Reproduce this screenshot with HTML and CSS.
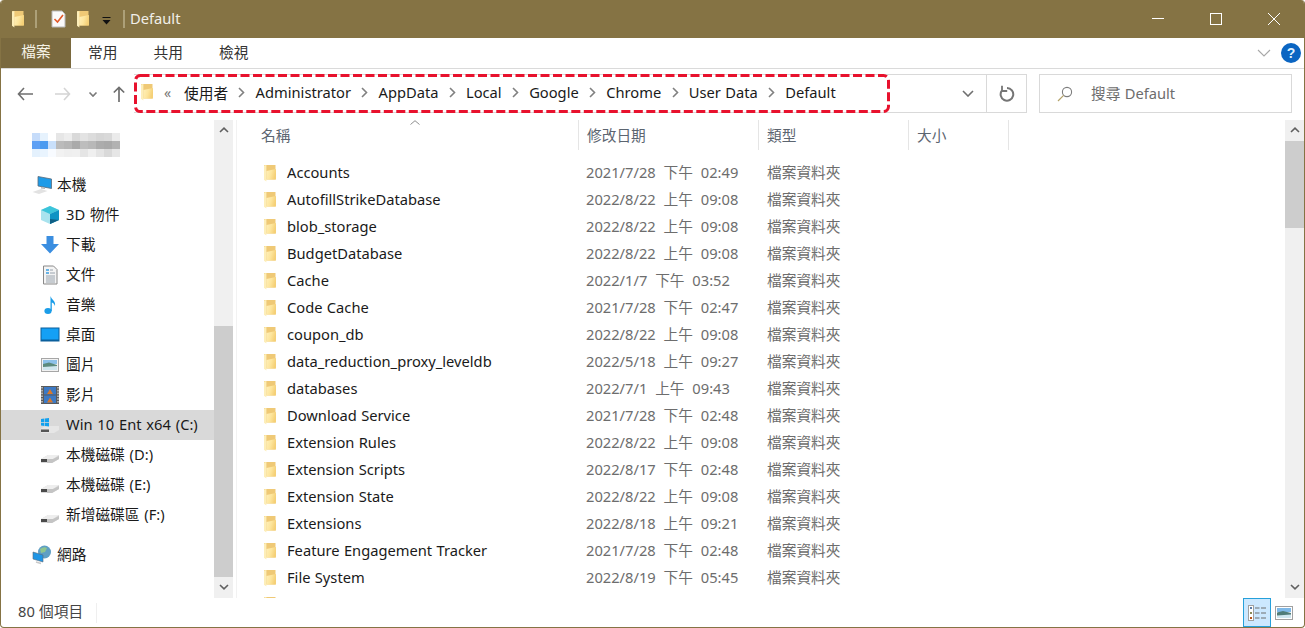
FILE: index.html
```html
<!DOCTYPE html>
<html lang="zh-Hant">
<head>
<meta charset="utf-8">
<title>Default</title>
<link rel="stylesheet" href="styles.css">
</head>
<body>
<svg class="defs" width="0" height="0" aria-hidden="true">
  <defs>
    <linearGradient id="fg" x1="0" y1="0" x2="1" y2="0.3">
      <stop offset="0" stop-color="#fff0ba"/><stop offset="0.55" stop-color="#fde59c"/><stop offset="1" stop-color="#f5d077"/>
    </linearGradient>
    <symbol id="folder" viewBox="0 0 14 18">
      <path d="M1 1 H12.5 V15.5 H1 Z" fill="#efc976"/>
      <path d="M3.4 7 L13 5 V15.5 H3.4 Z" fill="url(#fg)"/>
      <path d="M1 1.6 L3.4 1 V17.6 L1 15.8 Z" fill="#fdeeb9"/>
    </symbol>
    <symbol id="chev" viewBox="0 0 7 11">
      <path d="M1 1 L5.5 5.5 L1 10" fill="none" stroke="#808080" stroke-width="1.6"/>
    </symbol>
    <symbol id="drive" viewBox="0 0 20 14">
      <path d="M1 8 L8 4 H19 V8 L12 12 H1 Z" fill="#d8d8d8"/>
      <path d="M1 8 L8 4 H19 L13 8 Z" fill="#eeeeee"/>
      <path d="M1 8 H7 V11 H1 Z" fill="#4a4a4a"/>
      <path d="M7 8 H13 L19 5 V8 L12 12 H7 Z" fill="#c4c4c4"/>
    </symbol>
  </defs>
</svg>
<div class="window">
  <header class="titlebar">
    <svg class="qa-folder first"><use href="#folder"/></svg>
    <span class="qa-sep"></span>
    <svg class="qa-check" viewBox="0 0 15 18">
      <path d="M1 1 H11 L14 4 V17 H1 Z" fill="#fafafa" stroke="#b9b9b9"/>
      <path d="M3.5 9 L6.5 12 L12 5" fill="none" stroke="#e2592a" stroke-width="1.6"/>
    </svg>
    <svg class="qa-folder second"><use href="#folder"/></svg>
    <svg class="qa-down" viewBox="0 0 9 8">
      <rect x="0.5" y="0" width="8" height="1" fill="#111"/>
      <path d="M0.5 3 H8.5 L4.5 7.5 Z" fill="#111"/>
    </svg>
    <span class="qa-sep last"></span>
    <span class="title-text">Default</span>
    <div class="winbtns">
      <svg class="winbtn" viewBox="0 0 58 38"><path d="M23 18.5 H35" stroke="#fff" stroke-width="1" fill="none"/></svg>
      <svg class="winbtn" viewBox="0 0 58 38"><rect x="23.5" y="13.5" width="11" height="11" stroke="#fff" fill="none"/></svg>
      <svg class="winbtn" viewBox="0 0 58 38"><path d="M23 13 L35 25 M35 13 L23 25" stroke="#fff" fill="none"/></svg>
    </div>
  </header>

  <nav class="ribbon">
    <span class="tab active">檔案</span>
    <span class="tab">常用</span>
    <span class="tab">共用</span>
    <span class="tab">檢視</span>
    <svg class="ribbon-chev" viewBox="0 0 14 8"><path d="M1 1 L7 7 L13 1" fill="none" stroke="#a8a8a8" stroke-width="1.1"/></svg>
    <span class="help">?</span>
  </nav>

  <div class="addressrow">
    <div class="navbtns">
      <svg class="nav-back" viewBox="0 0 16 14"><path d="M7 1 L1.5 7 L7 13 M1.5 7 H16" fill="none" stroke="#6f6f6f" stroke-width="1.6"/></svg>
      <svg class="nav-fwd" viewBox="0 0 16 14"><path d="M9 1 L14.5 7 L9 13 M14.5 7 H0" fill="none" stroke="#d4d4d4" stroke-width="1.6"/></svg>
      <svg class="nav-drop" viewBox="0 0 10 7"><path d="M1.5 1.5 L5 5 L8.5 1.5" fill="none" stroke="#7a7a7a" stroke-width="1.6"/></svg>
      <svg class="nav-up" viewBox="0 0 12 16"><path d="M0.8 6.5 L6 1.5 L11.2 6.5 M6 1.5 V16" fill="none" stroke="#6f6f6f" stroke-width="1.7"/></svg>
    </div>
    <div class="address">
      <div class="crumbs">
        <svg class="crumb-folder"><use href="#folder"/></svg>
        <span class="more">«</span>
        <span>使用者</span><svg class="chev"><use href="#chev"/></svg>
        <span>Administrator</span><svg class="chev"><use href="#chev"/></svg>
        <span>AppData</span><svg class="chev"><use href="#chev"/></svg>
        <span>Local</span><svg class="chev"><use href="#chev"/></svg>
        <span>Google</span><svg class="chev"><use href="#chev"/></svg>
        <span>Chrome</span><svg class="chev"><use href="#chev"/></svg>
        <span>User Data</span><svg class="chev"><use href="#chev"/></svg>
        <span>Default</span>
        <svg class="redbox"><rect x="1.5" y="1.5" width="753" height="36" rx="5" fill="none" stroke="#e8112d" stroke-width="3" stroke-dasharray="9 3.5"/></svg>
      </div>
      <div class="addr-drop"><svg viewBox="0 0 12 7"><path d="M1 1 L6 6 L11 1" fill="none" stroke="#6f6f6f" stroke-width="1.6"/></svg></div>
      <div class="addr-refresh"><svg viewBox="0 0 16 17"><path d="M8 3 A6.3 6.3 0 1 1 3 5.4" fill="none" stroke="#757575" stroke-width="2"/><path d="M3 0.8 V6 H8.2" fill="none" stroke="#757575" stroke-width="1.8"/></svg></div>
    </div>
    <div class="search">
      <svg viewBox="0 0 16 16"><circle cx="10" cy="6" r="4.6" fill="none" stroke="#7d7d7d" stroke-width="1.1"/><path d="M6.6 9.4 L1 15" stroke="#b5a36a" stroke-width="1.2"/></svg>
      <span>搜尋 Default</span>
    </div>
  </div>

  <main class="main">
    <aside class="sidebar">
      <div class="tree">
        <div class="row top user">
          <svg class="mosaic" viewBox="0 0 11 3" shape-rendering="crispEdges">
            <rect x="0" y="0" width="1" height="1" fill="#c6dcfa"/><rect x="1" y="0" width="1" height="1" fill="#e6f2fd"/><rect x="3" y="0" width="1" height="1" fill="#e6e6e6"/><rect x="4" y="0" width="1" height="1" fill="#ededed"/><rect x="5" y="0" width="1" height="1" fill="#d9d9d9"/><rect x="6" y="0" width="1" height="1" fill="#e3e3e3"/><rect x="7" y="0" width="1" height="1" fill="#dcdcdc"/><rect x="8" y="0" width="1" height="1" fill="#d6d6d6"/><rect x="9" y="0" width="1" height="1" fill="#d9d9d9"/><rect x="10" y="0" width="1" height="1" fill="#ebebeb"/>
            <rect x="0" y="1" width="1" height="1" fill="#5ea0f4"/><rect x="1" y="1" width="1" height="1" fill="#4b9bf0"/><rect x="2" y="1" width="1" height="1" fill="#c9e0fb"/><rect x="3" y="1" width="1" height="1" fill="#bbbbbb"/><rect x="4" y="1" width="1" height="1" fill="#b6b6b6"/><rect x="5" y="1" width="1" height="1" fill="#aaaaaa"/><rect x="6" y="1" width="1" height="1" fill="#bdbdbd"/><rect x="7" y="1" width="1" height="1" fill="#b8b8b8"/><rect x="8" y="1" width="1" height="1" fill="#acacac"/><rect x="9" y="1" width="1" height="1" fill="#a9a9a9"/><rect x="10" y="1" width="1" height="1" fill="#b2b2b2"/>
            <rect x="0" y="2" width="1" height="1" fill="#e4f1fd"/><rect x="1" y="2" width="1" height="1" fill="#e9f4fe"/><rect x="2" y="2" width="1" height="1" fill="#f8fbff"/><rect x="3" y="2" width="1" height="1" fill="#f2f2f2"/><rect x="4" y="2" width="1" height="1" fill="#efefef"/><rect x="5" y="2" width="1" height="1" fill="#f0f0f0"/><rect x="6" y="2" width="1" height="1" fill="#e5e5e5"/><rect x="7" y="2" width="1" height="1" fill="#efefef"/><rect x="8" y="2" width="1" height="1" fill="#e4e4e4"/><rect x="9" y="2" width="1" height="1" fill="#d9d9d9"/><rect x="10" y="2" width="1" height="1" fill="#e6e6e6"/>
          </svg>
        </div>
        <div class="spacer"></div>
        <div class="row top">
          <svg class="ico" viewBox="0 0 20 18"><path d="M6 0.5 L19.5 3 V12.5 L6 10 Z" fill="#1e9be8" stroke="#5a6a78" stroke-width="0.8"/><path d="M0.5 16 L9 13 L15.5 15 L7 18 Z" fill="#e2e2e2"/><path d="M9 11 L13 11.8 V13 L9 12.4 Z" fill="#b5b5b5"/></svg>
          <span>本機</span>
        </div>
        <div class="row sub">
          <svg class="ico" viewBox="0 0 20 20"><path d="M10 1 L19 5 V15 L10 19 L1 15 V5 Z" fill="#a9e3ee"/><path d="M10 1 L19 5 L10 9 L1 5 Z" fill="#3cc4da"/><path d="M10 9 L19 5 V15 L10 19 Z" fill="#0e93c4"/><path d="M10 14 L19 15 L10 19 Z" fill="#0f5f85"/></svg>
          <span>3D 物件</span>
        </div>
        <div class="row sub">
          <svg class="ico" viewBox="0 0 20 20"><path d="M6.5 1 H13.5 V9 H19 L10 18.5 L1 9 H6.5 Z" fill="#3b8ee0"/></svg>
          <span>下載</span>
        </div>
        <div class="row sub">
          <svg class="ico" viewBox="0 0 20 20"><path d="M3.5 1 H13.5 L17 4.5 V19 H3.5 Z" fill="#f4f4f4" stroke="#8a8a8a"/><path d="M6 5 H9 M6 8 H9" stroke="#3b9de0" stroke-width="1.3"/><path d="M10 5 H13 M10 8 H15 M6 11 H15 M6 13 H15 M6 15 H15 M6 17 H15" stroke="#8e9aa5" stroke-width="0.9"/></svg>
          <span>文件</span>
        </div>
        <div class="row sub">
          <svg class="ico" viewBox="0 0 20 20"><ellipse cx="8" cy="16" rx="3.6" ry="2.9" fill="#1b9de8"/><path d="M10.5 16 V1 C11.5 5 16 5.5 15 11 C14 8 12.5 7.5 11.8 7.5 V16 Z" fill="#1b9de8"/></svg>
          <span>音樂</span>
        </div>
        <div class="row sub">
          <svg class="ico" viewBox="0 0 20 20"><rect x="1" y="3" width="18" height="13" fill="#14a0f5" stroke="#0a5f9c"/><rect x="1" y="14.5" width="18" height="1.5" fill="#0a5f9c"/></svg>
          <span>桌面</span>
        </div>
        <div class="row sub">
          <svg class="ico" viewBox="0 0 20 20"><rect x="1.5" y="3.5" width="17" height="13" fill="#f2f2f2" stroke="#a6a6a6"/><rect x="3" y="5" width="14" height="4" fill="#8cc1ea"/><path d="M3 9 L9 7.5 L17 10 V15 H3 Z" fill="#5b8a7e"/><path d="M3 12 L17 11 V15 H3 Z" fill="#cfe6ef"/></svg>
          <span>圖片</span>
        </div>
        <div class="row sub">
          <svg class="ico" viewBox="0 0 20 20"><rect x="1" y="1" width="18" height="18" fill="#5a5a5a"/><path d="M2 2 V18 M18 2 V18" stroke="#d5d5d5" stroke-width="1.4" stroke-dasharray="1.6 1.2"/><rect x="4" y="2" width="12" height="7.5" fill="#3c79c4"/><rect x="4" y="10.5" width="12" height="7.5" fill="#3c79c4"/><path d="M7 9 L10 4 L13 9 Z M7 17.5 L10 12.5 L13 17.5 Z" fill="#d9792a"/></svg>
          <span>影片</span>
        </div>
        <div class="row sub selected">
          <svg class="ico" viewBox="0 0 20 20"><path d="M1 13.5 L6 11 H19 V15 L14 18 H1 Z" fill="#e6e6e6"/><path d="M1 14.5 H9 V17 H1 Z" fill="#555"/><path d="M1 4 L4.4 3.5 V7 H1 Z M5 3.4 L9 3 V7 H5 Z M1 7.7 H4.4 V11 L1 10.6 Z M5 7.7 H9 V11.5 L5 11 Z" fill="#12a0ee"/></svg>
          <span>Win 10 Ent x64 (C:)</span>
        </div>
        <div class="row sub"><svg class="ico drive"><use href="#drive"/></svg><span>本機磁碟 (D:)</span></div>
        <div class="row sub"><svg class="ico drive"><use href="#drive"/></svg><span>本機磁碟 (E:)</span></div>
        <div class="row sub"><svg class="ico drive"><use href="#drive"/></svg><span>新增磁碟區 (F:)</span></div>
        <div class="spacer"></div>
        <div class="row top">
          <svg class="ico" viewBox="0 0 20 20"><circle cx="12.5" cy="7" r="6.5" fill="#5f9fc4"/><path d="M8 4 Q12 1 15 3 L13 7 L9 8 Z" fill="#8fc58f"/><path d="M1 7 L11 10 V17 L1 14 Z" fill="#1f96e6" stroke="#5a6a78" stroke-width="0.6"/><path d="M4 17 L9 18.5" stroke="#c9c9c9" stroke-width="1.5"/></svg>
          <span>網路</span>
        </div>
      </div>
    </aside>
    <div class="scrollbar nav-scroll">
      <svg class="sb-arrow" viewBox="0 0 10 6"><path d="M1 5 L5 1.2 L9 5" fill="none" stroke="#606060" stroke-width="1.6"/></svg>
      <div class="sb-space nav-top"></div>
      <div class="sb-thumb nav-thumb"></div>
      <svg class="sb-arrow" viewBox="0 0 10 6"><path d="M1 1 L5 4.8 L9 1" fill="none" stroke="#606060" stroke-width="1.6"/></svg>
    </div>

    <section class="content">
      <div class="headers">
        <svg class="sort" viewBox="0 0 10 5"><path d="M0.5 4.5 L5 0.7 L9.5 4.5" fill="none" stroke="#8f8f8f"/></svg>
        <div class="col c-name">名稱</div>
        <div class="col c-date">修改日期</div>
        <div class="col c-type">類型</div>
        <div class="col c-size">大小</div>
      </div>
      <div class="files">
        <div class="file"><span class="fname"><svg class="fico"><use href="#folder"/></svg>Accounts</span><span class="fmeta">2021/7/28 下午 02:49</span><span class="fmeta">檔案資料夾</span></div>
        <div class="file"><span class="fname"><svg class="fico"><use href="#folder"/></svg>AutofillStrikeDatabase</span><span class="fmeta">2022/8/22 上午 09:08</span><span class="fmeta">檔案資料夾</span></div>
        <div class="file"><span class="fname"><svg class="fico"><use href="#folder"/></svg>blob_storage</span><span class="fmeta">2022/8/22 上午 09:08</span><span class="fmeta">檔案資料夾</span></div>
        <div class="file"><span class="fname"><svg class="fico"><use href="#folder"/></svg>BudgetDatabase</span><span class="fmeta">2022/8/22 上午 09:08</span><span class="fmeta">檔案資料夾</span></div>
        <div class="file"><span class="fname"><svg class="fico"><use href="#folder"/></svg>Cache</span><span class="fmeta">2022/1/7 下午 03:52</span><span class="fmeta">檔案資料夾</span></div>
        <div class="file"><span class="fname"><svg class="fico"><use href="#folder"/></svg>Code Cache</span><span class="fmeta">2021/7/28 下午 02:47</span><span class="fmeta">檔案資料夾</span></div>
        <div class="file"><span class="fname"><svg class="fico"><use href="#folder"/></svg>coupon_db</span><span class="fmeta">2022/8/22 上午 09:08</span><span class="fmeta">檔案資料夾</span></div>
        <div class="file"><span class="fname"><svg class="fico"><use href="#folder"/></svg>data_reduction_proxy_leveldb</span><span class="fmeta">2022/5/18 上午 09:27</span><span class="fmeta">檔案資料夾</span></div>
        <div class="file"><span class="fname"><svg class="fico"><use href="#folder"/></svg>databases</span><span class="fmeta">2022/7/1 上午 09:43</span><span class="fmeta">檔案資料夾</span></div>
        <div class="file"><span class="fname"><svg class="fico"><use href="#folder"/></svg>Download Service</span><span class="fmeta">2021/7/28 下午 02:48</span><span class="fmeta">檔案資料夾</span></div>
        <div class="file"><span class="fname"><svg class="fico"><use href="#folder"/></svg>Extension Rules</span><span class="fmeta">2022/8/22 上午 09:08</span><span class="fmeta">檔案資料夾</span></div>
        <div class="file"><span class="fname"><svg class="fico"><use href="#folder"/></svg>Extension Scripts</span><span class="fmeta">2022/8/17 下午 02:48</span><span class="fmeta">檔案資料夾</span></div>
        <div class="file"><span class="fname"><svg class="fico"><use href="#folder"/></svg>Extension State</span><span class="fmeta">2022/8/22 上午 09:08</span><span class="fmeta">檔案資料夾</span></div>
        <div class="file"><span class="fname"><svg class="fico"><use href="#folder"/></svg>Extensions</span><span class="fmeta">2022/8/18 上午 09:21</span><span class="fmeta">檔案資料夾</span></div>
        <div class="file"><span class="fname"><svg class="fico"><use href="#folder"/></svg>Feature Engagement Tracker</span><span class="fmeta">2021/7/28 下午 02:48</span><span class="fmeta">檔案資料夾</span></div>
        <div class="file"><span class="fname"><svg class="fico"><use href="#folder"/></svg>File System</span><span class="fmeta">2022/8/19 下午 05:45</span><span class="fmeta">檔案資料夾</span></div>
        <div class="file"><span class="fname"><svg class="fico"><use href="#folder"/></svg></span></div>
      </div>
    </section>
    <div class="scrollbar file-scroll">
      <svg class="sb-arrow" viewBox="0 0 10 6"><path d="M1 5 L5 1.2 L9 5" fill="none" stroke="#606060" stroke-width="1.6"/></svg>
      <div class="sb-thumb file-thumb"></div>
      <div class="sb-space"></div>
      <svg class="sb-arrow" viewBox="0 0 10 6"><path d="M1 1 L5 4.8 L9 1" fill="none" stroke="#606060" stroke-width="1.6"/></svg>
    </div>
  </main>

  <footer class="status">
    <span class="count">80 個項目</span>
    <span class="status-sep"></span>
    <div class="views">
      <div class="view on">
        <svg viewBox="0 0 18 16"><rect x="0.5" y="0.5" width="5" height="15" fill="#fff" stroke="#a0a0a0"/><rect x="2" y="2" width="2" height="2" fill="#5a7ca8"/><rect x="2" y="7" width="2" height="2" fill="#8a8a5a"/><rect x="2" y="12" width="2" height="2" fill="#b5541c"/><path d="M7 3 H11.5 M13 3 H18 M7 8 H11.5 M13 8 H18 M7 13 H11.5 M13 13 H18" stroke="#6e6e6e" stroke-width="1"/></svg>
      </div>
      <div class="view">
        <svg viewBox="0 0 18 14"><rect x="0.5" y="0.5" width="17" height="13" fill="#fff" stroke="#a0a0a0"/><rect x="2" y="2" width="14" height="4" fill="#7fb9e8"/><path d="M2 6.5 L8 5 L16 7 V12 H2 Z" fill="#4f7c78"/><path d="M2 9.5 L16 8.5 V12 H2 Z" fill="#cfe6ef"/></svg>
      </div>
    </div>
  </footer>
</div>
</body>
</html>
```

FILE: styles.css
```css
* { box-sizing: border-box; }
html, body { margin: 0; height: 100%; background: #fff; overflow: hidden; }
body { font-family: "Noto Sans", "Noto Sans CJK TC", sans-serif; font-size: 14.7px; word-spacing: 0.5px; color: #1a1a1a; }
.defs { position: absolute; }
svg { display: block; flex: none; }

.window { height: 628px; display: flex; flex-direction: column; border: 1px solid #857344; border-top: 0; border-radius: 4px; overflow: hidden; background: #fff; }

.titlebar { height: 38px; flex: none; background: #857344; display: flex; align-items: center; }
.qa-folder { width: 14px; height: 18px; }
.qa-folder.first { margin-left: 10px; }
.qa-sep { width: 2px; height: 18px; background: #ada078; margin-left: 10px; }
.qa-check { width: 15px; height: 18px; margin-left: 14px; }
.qa-folder.second { margin-left: 10px; }
.qa-down { width: 9px; height: 8px; margin: 4px 0 0 12px; }
.qa-sep.last { margin-left: 12px; }
.title-text { margin-left: 5px; padding-bottom: 2px; color: #f1efe8; }
.winbtns { margin-left: auto; display: flex; margin-right: 1px; }
.winbtn { width: 58px; height: 38px; }

.ribbon { height: 31px; flex: none; display: flex; align-items: center; border-bottom: 1px solid #dadada; color: #333; }
.tab { width: 65.5px; text-align: center; padding-bottom: 4px; }
.tab.active { width: 70px; height: 30px; padding: 0; line-height: 27px; background: #7a693e; color: #f5f2e6; margin-right: -1px; }
.ribbon-chev { width: 14px; height: 8px; margin-left: auto; margin-right: 10px; }
.help { width: 20px; height: 20px; border-radius: 50%; background: #0b65c2; color: #dff0ff; font: bold 14px/20px "Liberation Sans", sans-serif; text-align: center; margin-right: 3px; }

.addressrow { height: 51px; flex: none; display: flex; align-items: flex-start; padding-top: 5px; }
.navbtns { width: 133px; height: 39px; display: flex; align-items: center; padding-top: 1px; }
.nav-back { width: 16px; height: 14px; margin-left: 16px; }
.nav-fwd { width: 16px; height: 14px; margin-left: 22px; }
.nav-drop { width: 10px; height: 7px; margin-left: 17px; }
.nav-up { width: 12px; height: 16px; margin-left: 15px; }

.address { width: 893px; height: 39px; display: flex; border: 1px solid #d9d9d9; border-left: 0; }
.crumbs { position: relative; width: 756px; height: 39px; margin-top: -1px; display: flex; align-items: center; padding: 0 0 3px 6px; color: #1a1a1a; }
.crumb-folder { width: 14px; height: 18px; }
.more { width: 30px; padding-left: 10px; color: #777; font-size: 14px; }
.chev { width: 7px; height: 11px; margin: 0 10.25px; }
.redbox { position: absolute; left: 0; top: 0; width: 756px; height: 39px; }
.addr-drop { width: 97px; display: flex; align-items: center; justify-content: flex-end; padding-right: 12px; border-right: 1px solid #d9d9d9; }
.addr-drop svg { width: 12px; height: 7px; }
.addr-refresh { flex: 1; display: flex; align-items: center; justify-content: center; }
.addr-refresh svg { width: 16px; height: 17px; }

.search { width: 253px; height: 39px; margin-left: 12px; border: 1px solid #d9d9d9; display: flex; align-items: center; color: #6d6d6d; }
.search svg { width: 16px; height: 16px; margin-left: 17px; }
.search span { margin-left: 18px; padding-bottom: 2px; }

.main { flex: 1; min-height: 0; display: flex; }
.sidebar { width: 213px; flex: none; overflow: hidden; word-spacing: 1px; }
.tree { padding-top: 10px; }
.row { height: 30px; display: flex; align-items: center; }
.row span { padding-bottom: 4px; }
.row.selected span { padding-bottom: 2px; }
.spacer { height: 10px; }
.row.top { padding-left: 31px; }
.row.sub { padding-left: 39px; }
.row.top .ico { margin-right: 5px; }
.row.sub .ico { margin-right: 6px; }
.ico { width: 20px; height: 20px; }
.ico.drive { height: 14px; margin-top: 6px; }
.row.selected { background: #d9d9d9; }
.mosaic { width: 88px; height: 24px; }

.scrollbar { width: 19px; flex: none; background: #f0f0f0; display: flex; flex-direction: column; align-items: center; }
.sb-arrow { width: 10px; height: 6px; margin: 7px 0 8px; }
.sb-thumb { width: 100%; background: #cdcdcd; }
.sb-space { flex: 1; }
.nav-scroll { margin-right: 3px; }
.nav-top { flex: none; height: 185px; }
.nav-thumb { flex: 1; }
.file-thumb { height: 87px; }

.content { flex: 1; min-width: 0; border-left: 1px solid #f2f2f2; overflow: hidden; display: flex; flex-direction: column; }
.headers { position: relative; height: 30px; flex: none; display: flex; color: #5c6570; }
.col { border-right: 1px solid #e5e5e5; height: 30px; line-height: 31px; padding-left: 8px; }
.c-name { width: 342px; padding-left: 24px; }
.c-date { width: 180px; }
.c-type { width: 150px; }
.c-size { width: 100px; }
.sort { position: absolute; left: 173px; top: 0; width: 10px; height: 5px; }
.files { padding-top: 9px; flex: 1; overflow: hidden; }
.file { height: 27px; padding-bottom: 2px; display: grid; grid-template-columns: 349px 181px auto; align-items: center; }
.fname { display: flex; align-items: center; padding-left: 26px; }
.fico { width: 14px; height: 18px; margin: 2px 10px 0 0; }
.fmeta { color: #6d6d6d; word-spacing: 4px; }

.status { height: 29px; flex: none; display: flex; align-items: center; color: #444; }
.count { margin-left: 17px; width: 78px; padding-bottom: 4px; }
.status-sep { width: 1px; height: 20px; background: #efefef; }
.views { margin-left: auto; display: flex; align-items: center; margin-right: 11px; height: 29px; }
.view { width: 28px; height: 29px; display: flex; align-items: center; justify-content: center; }
.view.on { background: #cce8ff; border: 1px solid #26a0da; margin-right: 4px; }
.view.on svg { width: 18px; height: 16px; }
.view:not(.on) { width: 18px; }
.view:not(.on) svg { width: 18px; height: 14px; }
```
